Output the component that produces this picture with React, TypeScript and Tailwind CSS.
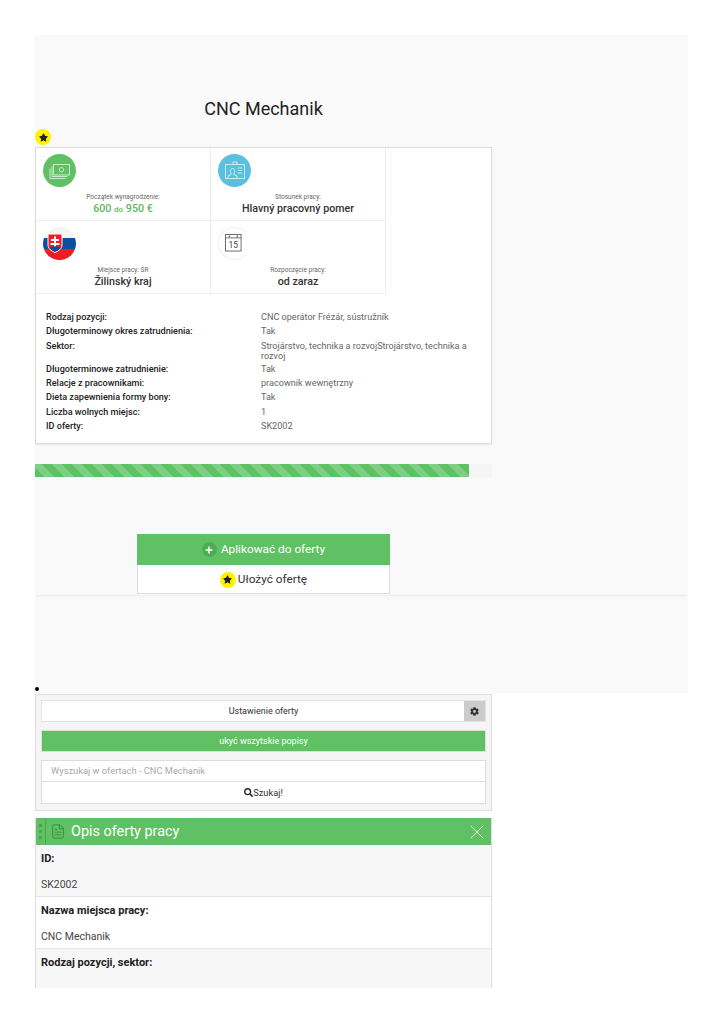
import { Plus, X, FileText } from "lucide-react";
import { FaCog, FaSearch, FaStar } from "react-icons/fa";

const details = [
  ["Rodzaj pozycji:", "CNC operátor Frézár, sústružník"],
  ["Długoterminowy okres zatrudnienia:", "Tak"],
  ["Sektor:", "Strojárstvo, technika a rozvojStrojárstvo, technika a rozvoj"],
  ["Długoterminowe zatrudnienie:", "Tak"],
  ["Relacje z pracownikami:", "pracownik wewnętrzny"],
  ["Dieta zapewnienia formy bony:", "Tak"],
  ["Liczba wolnych miejsc:", "1"],
  ["ID oferty:", "SK2002"],
];

function StarBadge() {
  return (
    <span className="flex h-4 w-4 shrink-0 items-center justify-center rounded-full bg-[#fff200]">
      <FaStar className="h-[9px] w-[9px] text-[#222]" />
    </span>
  );
}

function MoneyIcon() {
  return (
    <div className="h-[33px] w-[33px] rounded-full bg-[#5fc164]">
      <svg viewBox="0 0 33 33" className="h-full w-full" fill="none" stroke="#c9ecca" strokeWidth="1">
        <rect x="10.5" y="10.5" width="16" height="10.5" fill="#5fc164" />
        <circle cx="18.5" cy="15.7" r="2.2" />
        <path d="M9 12.5v10h15.5M7 14.5v10h15.5" />
      </svg>
    </div>
  );
}

function BadgeIcon() {
  return (
    <div className="h-[33px] w-[33px] rounded-full bg-[#5bc0de]">
      <svg viewBox="0 0 33 33" className="h-full w-full" fill="none" stroke="#d5f0f8" strokeWidth="0.9">
        <rect x="7.5" y="10.5" width="19" height="14" />
        <path d="M15 10.5V8h4v2.5" />
        <path d="M10 24v-2l3-1.5v-1.5c-1-1-1-4.5 1.5-4.5s2.500 3.500 1.500 4.500v1.500l3 1.500v2" />
        <path d="M20 14h4M20 16.500h4M20 19h4" />
      </svg>
    </div>
  );
}

function FlagIcon() {
  return (
    <div className="h-[33px] w-[33px] rounded-full">
      <svg viewBox="0 0 33 33" className="h-full w-full">
        <defs>
          <clipPath id="flag-clip">
            <circle cx="16.500" cy="16.500" r="16.500" />
          </clipPath>
        </defs>
        <g clipPath="url(#flag-clip)">
          <rect width="33" height="11" fill="#f4f4f4" />
          <rect y="11" width="33" height="11" fill="#0b4ea2" />
          <rect y="22" width="33" height="11" fill="#ee1c25" />
        </g>
        <path d="M5 7h14v11c0 4-3.500 6-7 7.500-3.500-1.500-7-3.500-7-7.500z" fill="#ee1c25" stroke="#fff" strokeWidth="1" />
        <path d="M11 9.500h2v2.500h3v2h-3v2h3.500v2H13v3h-2v-3H7.500v-2H11v-2H8v-2h3z" fill="#fff" />
        <path d="M6.500 21c2-2.500 9-2.500 11 0-1.500 1.500-3.500 3-5.500 3.800-2-.8-4-2.300-5.500-3.800z" fill="#0b4ea2" />
      </svg>
    </div>
  );
}

function CalendarIcon() {
  return (
    <div className="h-[33px] w-[33px] rounded-full border border-[#eeeeee] border-r-white">
      <svg viewBox="0 0 33 33" className="h-full w-full" fill="none" stroke="#555" strokeWidth="0.9">
        <rect x="7" y="7" width="16.500" height="17.500" fill="#fff" />
        <path d="M7 10.500h16.500" />
        <circle cx="11" cy="8.700" r="0.500" fill="#555" />
        <circle cx="19.500" cy="8.700" r="0.500" fill="#555" />
        <text x="15.200" y="21" textAnchor="middle" fontSize="9" fill="#444" stroke="none" fontFamily="Roboto, sans-serif">15</text>
      </svg>
    </div>
  );
}

function InfoCell({ icon, label, children }: { icon: React.ReactNode; label: string; children: React.ReactNode }) {
  return (
    <div className="h-[73px] w-[175px] border-r border-b border-[#ececec] pt-[6px] pl-[7px]">
      {icon}
      <div className="mt-[5px] -ml-[7px] text-center text-[6.500px] leading-[10px] text-[#666]">{label}</div>
      <div className="-ml-[7px] text-center text-[10.700px] leading-[14px] font-medium text-[#333]">{children}</div>
    </div>
  );
}

export default function App() {
  return (
    <div className="h-[988px] overflow-hidden bg-white pt-[35px] pl-[35px] font-['Roboto',sans-serif]">
      <div className="h-[658px] w-[653px] bg-[#f9f9f9]">
        <div className="h-[560px] shadow-[0_2px_2px_-1px_rgba(0,0,0,0.06)]">
          <h1 className="w-[457px] pt-[62px] text-center text-[18px] leading-[24px] font-normal text-[#222]">CNC Mechanik</h1>
          <div className="mt-[8px] h-[18px]">
            <StarBadge />
          </div>

          <div className="h-[297px] w-[457px] border border-[#dddddd] bg-white shadow-[0_1px_2px_rgba(0,0,0,0.08)]">
            <div className="grid w-[350px] grid-cols-2">
              <InfoCell icon={<MoneyIcon />} label="Początek wynagrodzenie:">
                <span className="text-[#5cb85c]">
                  600 <span className="text-[8px]">do</span> 950 €
                </span>
              </InfoCell>
              <InfoCell icon={<BadgeIcon />} label="Stosunek pracy:">
                Hlavný pracovný pomer
              </InfoCell>
              <InfoCell icon={<FlagIcon />} label="Miejsce pracy: SR">
                Žilinský kraj
              </InfoCell>
              <InfoCell icon={<CalendarIcon />} label="Rozpoczęcie pracy:">
                od zaraz
              </InfoCell>
            </div>

            <div className="pt-[18px] pl-[10px] text-[9.100px] leading-[10px]">
              {details.map(([k, v]) => (
                <div key={k} className={v.length > 40 ? "flex pb-[3.300px]" : "flex pb-[4.300px]"}>
                  <div className="w-[215px] shrink-0 font-medium text-[#222]">{k}</div>
                  <div className="w-[210px] text-[#666]">{v}</div>
                </div>
              ))}
            </div>
          </div>

          <div className="mt-[20px] h-[14px] w-[457px] bg-[#f5f5f5]">
            <div className="h-[13px] w-[434px] bg-[repeating-linear-gradient(45deg,#5fc164_0,#5fc164_7px,#7fce83_7px,#7fce83_14px)]" />
          </div>

          <div className="mt-[56px] ml-[102px] w-[253px]">
            <div className="flex h-[31px] items-center justify-center gap-[4px] bg-[#5fc164] text-[11.800px] text-white">
              <span className="flex h-[15px] w-[15px] items-center justify-center rounded-full bg-[#4fae54]">
                <Plus className="h-[10px] w-[10px]" strokeWidth={3.500} />
              </span>
              Aplikować do oferty
            </div>
            <div className="flex h-[29px] items-center justify-center gap-[2px] border border-t-0 border-[#dddddd] bg-white pt-px text-[11.800px] text-[#333]">
              <StarBadge />
              Ułożyć ofertę
            </div>
          </div>
        </div>
      </div>

      <div className="h-0">
        <div className="h-[4px] w-[4px] -translate-y-[6px] rounded-full bg-black" />
      </div>

      <div className="mt-px h-[117px] w-[457px] border border-[#dddddd] bg-[#f5f5f5] px-[5px] pt-[5px]">
        <div className="flex h-[22px] border border-[#e3e3e3] bg-white text-[9px] text-[#333]">
          <div className="flex flex-1 items-center justify-center pt-px pl-[21px]">Ustawienie oferty</div>
          <div className="flex w-[21px] items-center justify-center bg-[#cccccc]">
            <FaCog className="h-[9px] w-[9px] text-[#333]" />
          </div>
        </div>
        <div className="mt-[8px] flex h-[22px] items-center justify-center border border-[#dddddd] bg-[#5fc164] pt-px text-[9px] text-white">
          ukyć wszytskie popisy
        </div>
        <div className="mt-[8px] flex h-[22px] items-center border border-[#dddddd] bg-white pl-[9px] text-[9.300px] text-[#aaaaaa]">
          Wyszukaj w ofertach - CNC Mechanik
        </div>
        <div className="flex h-[22px] items-center justify-center border border-t-0 border-[#dddddd] bg-white text-[9.300px] text-[#333]">
          <FaSearch className="h-[9px] w-[9px] text-[#222]" />
          Szukaj!
        </div>
      </div>

      <div className="mt-[7px] w-[457px] border-x border-[#dddddd]">
        <div className="flex h-[27px] items-center bg-[#5fc164] text-white">
          <div className="flex h-full w-[10px] flex-col items-center justify-center gap-[3px] border-r border-[#4da552]">
            <span className="h-[3px] w-[3px] bg-[#4da552]" />
            <span className="h-[3px] w-[3px] bg-[#4da552]" />
            <span className="h-[3px] w-[3px] bg-[#4da552]" />
          </div>
          <FileText className="ml-[4px] h-[17px] w-[16px] text-[#2f7d33]" strokeWidth={1.100} />
          <span className="ml-[5px] flex-1 text-[14.400px]">Opis oferty pracy</span>
          <X className="mr-[2px] h-[24px] w-[24px]" strokeWidth={0.750} />
        </div>
        <div className="h-[52px] border-b border-[#e4e4e4] bg-[#f7f7f7] px-[5px] pt-[7px] text-[10.500px] text-[#222]">
          <div className="text-[11px] leading-[14px] font-bold">ID:</div>
          <div className="mt-[12px] leading-[14px] text-[#444]">SK2002</div>
        </div>
        <div className="h-[52px] border-b border-[#e4e4e4] bg-white px-[5px] pt-[7px] text-[10.500px] text-[#222]">
          <div className="text-[11px] leading-[14px] font-bold">Nazwa miejsca pracy:</div>
          <div className="mt-[12px] leading-[14px] text-[#444]">CNC Mechanik</div>
        </div>
        <div className="h-[52px] bg-[#f7f7f7] px-[5px] pt-[7px] text-[10.500px] text-[#222]">
          <div className="text-[11px] leading-[14px] font-bold">Rodzaj pozycji, sektor:</div>
        </div>
      </div>
    </div>
  );
}
